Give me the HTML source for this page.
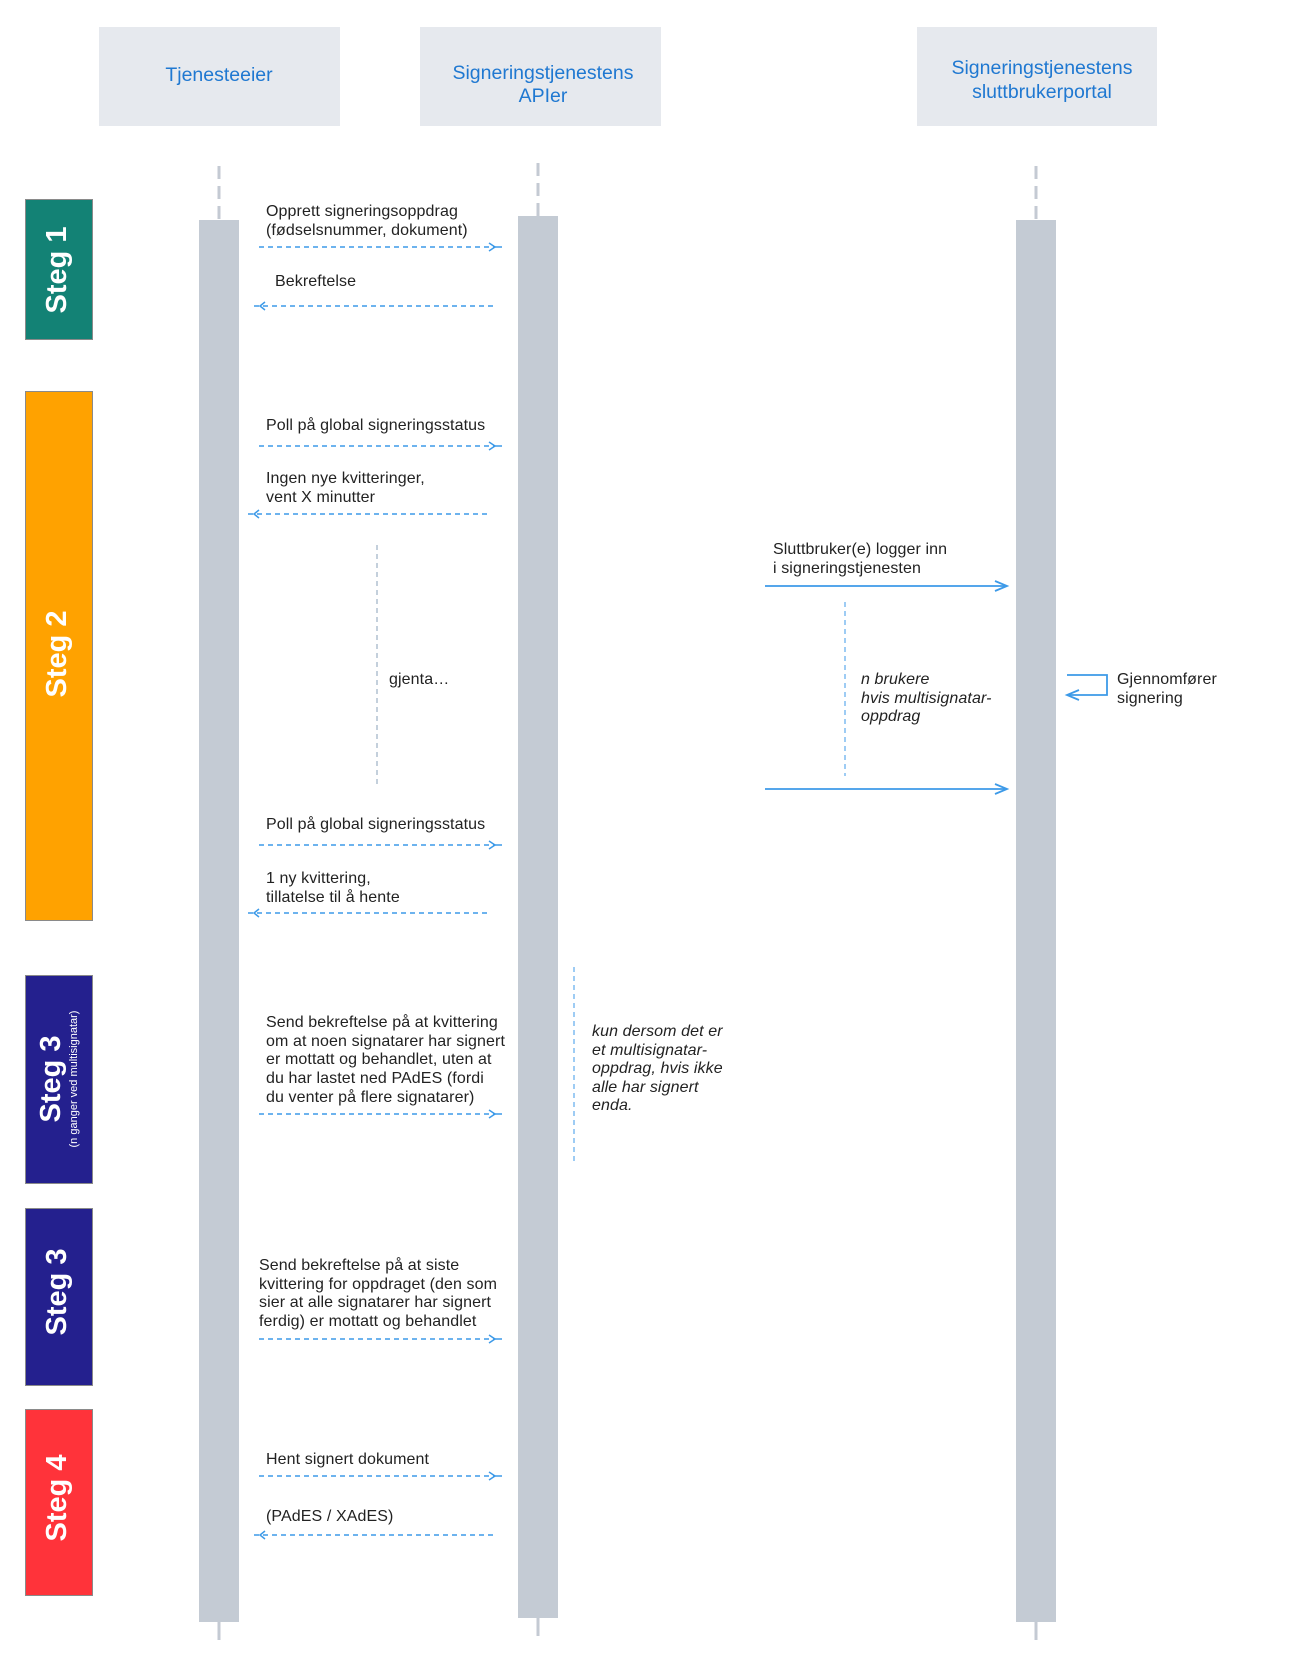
<!DOCTYPE html>
<html><head><meta charset="utf-8"><style>
html,body{margin:0;padding:0;background:#fff;}
svg{display:block;}
text{font-family:"Liberation Sans",sans-serif;}
</style></head><body>
<svg width="1298" height="1656" viewBox="0 0 1298 1656" xmlns="http://www.w3.org/2000/svg">
<rect x="99" y="27" width="241" height="99" fill="#e6e9ee"/>
<rect x="420" y="27" width="241" height="99" fill="#e6e9ee"/>
<rect x="917" y="27" width="240" height="99" fill="#e6e9ee"/>
<g fill="#1f78d1" font-size="19.5" text-anchor="middle">
<text x="219" y="81">Tjenesteeier</text>
<text x="543" y="79">Signeringstjenestens</text>
<text x="543" y="102">APIer</text>
<text x="1042" y="74">Signeringstjenestens</text>
<text x="1042" y="98">sluttbrukerportal</text>
</g>
<g stroke="#c4cad3" stroke-width="3" stroke-dasharray="13 7">
<line x1="219" y1="166" x2="219" y2="221"/>
<line x1="538" y1="163" x2="538" y2="217"/>
<line x1="1036" y1="166" x2="1036" y2="221"/>
</g>
<g stroke="#c4cad3" stroke-width="3">
<line x1="219" y1="1622" x2="219" y2="1640"/>
<line x1="538" y1="1618" x2="538" y2="1636"/>
<line x1="1036" y1="1622" x2="1036" y2="1640"/>
</g>
<rect x="199" y="220" width="40" height="1402" fill="#c4cbd4"/>
<rect x="518" y="216" width="40" height="1402" fill="#c4cbd4"/>
<rect x="1016" y="220" width="40" height="1402" fill="#c4cbd4"/>
<g stroke="#8a8a8a" stroke-width="1">
<rect x="25.5" y="199.5" width="67" height="140" fill="#138275"/>
<rect x="25.5" y="391.5" width="67" height="529" fill="#ffa200"/>
<rect x="25.5" y="975.5" width="67" height="208" fill="#24208e"/>
<rect x="25.5" y="1208.5" width="67" height="177" fill="#24208e"/>
<rect x="25.5" y="1409.5" width="67" height="186" fill="#ff333a"/>
</g>
<g fill="#fff" font-size="29" font-weight="bold" text-anchor="middle">
<text transform="translate(66,270) rotate(-90)">Steg 1</text>
<text transform="translate(66,654) rotate(-90)">Steg 2</text>
<text transform="translate(60,1079) rotate(-90)">Steg 3</text>
<text transform="translate(77,1079) rotate(-90)" font-size="11" font-weight="normal">(n ganger ved multisignatar)</text>
<text transform="translate(66,1292) rotate(-90)">Steg 3</text>
<text transform="translate(66,1498) rotate(-90)">Steg 4</text>
</g>
<g stroke="#3d9ae8" stroke-width="1.6" stroke-dasharray="5 4" fill="none">
<line x1="259" y1="247" x2="496" y2="247"/>
<line x1="263" y1="306" x2="494" y2="306"/>
<line x1="259" y1="446" x2="496" y2="446"/>
<line x1="257" y1="514" x2="489" y2="514"/>
<line x1="259" y1="845" x2="496" y2="845"/>
<line x1="257" y1="913" x2="489" y2="913"/>
<line x1="259" y1="1114" x2="496" y2="1114"/>
<line x1="259" y1="1339" x2="496" y2="1339"/>
<line x1="259" y1="1476" x2="496" y2="1476"/>
<line x1="263" y1="1535" x2="494" y2="1535"/>
</g>
<g stroke="#3d9ae8" stroke-width="1.5" fill="none">
<path d="M489 243 L495 247 L489 251 M496 247 L502 247"/>
<path d="M489 442 L495 446 L489 450 M496 446 L502 446"/>
<path d="M489 841 L495 845 L489 849 M496 845 L502 845"/>
<path d="M489 1110 L495 1114 L489 1118 M496 1114 L502 1114"/>
<path d="M489 1335 L495 1339 L489 1343 M496 1339 L502 1339"/>
<path d="M489 1472 L495 1476 L489 1480 M496 1476 L502 1476"/>
<path d="M265 302 L260 306 L265 310 M259 306 L254 306"/>
<path d="M259 510 L254 514 L259 518 M253 514 L248 514"/>
<path d="M259 909 L254 913 L259 917 M253 913 L248 913"/>
<path d="M265 1531 L260 1535 L265 1539 M259 1535 L254 1535"/>
</g>
<g stroke="#3d9ae8" stroke-width="1" stroke-dasharray="5 4">
<line x1="377" y1="545" x2="377" y2="788" stroke="#8aa0b8"/>
<line x1="845" y1="602" x2="845" y2="776"/>
<line x1="574" y1="967" x2="574" y2="1163"/>
</g>
<g stroke="#3d9ae8" stroke-width="1.8" fill="none">
<line x1="765" y1="586" x2="1006" y2="586"/>
<path d="M995 581 L1007 586 L995 591"/>
<line x1="765" y1="789" x2="1006" y2="789"/>
<path d="M995 784 L1007 789 L995 794"/>
<path d="M1067 675 L1107 675 L1107 695 L1068 695"/>
<path d="M1079 690 L1067 695 L1079 700"/>
</g>
<g fill="#222" font-size="16" letter-spacing="0.1">
<text x="266" y="216">Opprett signeringsoppdrag</text>
<text x="266" y="235">(fødselsnummer, dokument)</text>
<text x="275" y="286">Bekreftelse</text>
<text x="266" y="430">Poll på global signeringsstatus</text>
<text x="266" y="483">Ingen nye kvitteringer,</text>
<text x="266" y="502">vent X minutter</text>
<text x="389" y="684">gjenta…</text>
<text x="773" y="554">Sluttbruker(e) logger inn</text>
<text x="773" y="573">i signeringstjenesten</text>
<text x="1117" y="684">Gjennomfører</text>
<text x="1117" y="703">signering</text>
<text x="266" y="829">Poll på global signeringsstatus</text>
<text x="266" y="883">1 ny kvittering,</text>
<text x="266" y="902">tillatelse til å hente</text>
<text x="266" y="1027">Send bekreftelse på at kvittering</text>
<text x="266" y="1046">om at noen signatarer har signert</text>
<text x="266" y="1064">er mottatt og behandlet, uten at</text>
<text x="266" y="1083">du har lastet ned PAdES (fordi</text>
<text x="266" y="1102">du venter på flere signatarer)</text>
<text x="259" y="1270">Send bekreftelse på at siste</text>
<text x="259" y="1289">kvittering for oppdraget (den som</text>
<text x="259" y="1307">sier at alle signatarer har signert</text>
<text x="259" y="1326">ferdig) er mottatt og behandlet</text>
<text x="266" y="1464">Hent signert dokument</text>
<text x="266" y="1521">(PAdES / XAdES)</text>
</g>
<g fill="#222" font-size="16" letter-spacing="0.1" font-style="italic">
<text x="861" y="684">n brukere</text>
<text x="861" y="703">hvis multisignatar-</text>
<text x="861" y="721">oppdrag</text>
<text x="592" y="1036">kun dersom det er</text>
<text x="592" y="1055">et multisignatar-</text>
<text x="592" y="1073">oppdrag, hvis ikke</text>
<text x="592" y="1092">alle har signert</text>
<text x="592" y="1110">enda.</text>
</g>
</svg>
</body></html>
